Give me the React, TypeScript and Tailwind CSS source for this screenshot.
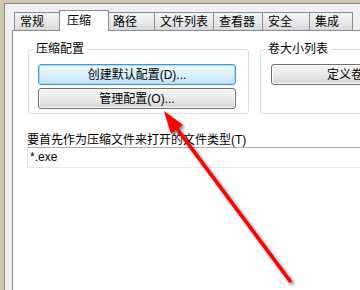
import React from "react";

const tabs = [
  { label: "常规", w: "w-[46px]" },
  { label: "压缩", w: "w-[50px]", active: true },
  { label: "路径", w: "w-[47px]" },
  { label: "文件列表", w: "w-[59px]" },
  { label: "查看器", w: "w-[49px]" },
  { label: "安全", w: "w-[47px]" },
  { label: "集成", w: "w-[43px]" },
];

const font = "font-['Liberation_Sans','Noto_Sans_CJK_SC',sans-serif]";

function Btn({ label, focused }: { label: string; focused?: boolean }) {
  return (
    <div
      className={
        "h-[21px] w-[198px] shrink-0 rounded-[3px] border flex items-center justify-center text-[12px] leading-none text-black " +
        (focused
          ? "border-[#3c9ad9] bg-gradient-to-b from-[#eef8fe] via-[#dcf0fb] to-[#c2e3f6] shadow-[inset_0_0_0_1px_#a8dcf7]"
          : "border-[#707070] bg-gradient-to-b from-[#f3f3f3] via-[#ebebeb] to-[#d4d4d4] shadow-[inset_0_0_0_1px_#fbfbfb]")
      }
    >
      {label}
    </div>
  );
}

function GroupBox({ title, children, className }: { title: string; children: React.ReactNode; className?: string }) {
  return (
    <div className={"relative rounded-[3px] border border-[#d5dfe5] " + (className ?? "")}>
      <span className="absolute -top-[8px] left-[4px] bg-white px-[3px] text-[12px] leading-[14px] text-black">{title}</span>
      {children}
    </div>
  );
}

export default function App() {
  return (
    <div className={"relative w-[360px] h-[290px] overflow-hidden bg-[#d0c8aa] pt-[3px] pl-[4px] " + font}>
      <div className="h-full border-l border-t border-[#8c8c8c] bg-[#f0f0f0] pl-[7px] pt-[6px] flex flex-col">
        {/* tab strip */}
        <div className="flex items-end h-[20px] pl-[2px]">
          {tabs.map((t) =>
            t.active ? (
              <div
                key={t.label}
                className={t.w + " relative z-10 -mx-[1px] h-[21px] -mb-[1px] border border-b-0 border-[#898c95] bg-white pl-[7px] pt-[2px] text-[12px] leading-[16px] text-black"}
              >
                {t.label}
              </div>
            ) : (
              <div
                key={t.label}
                className={t.w + " h-[18px] border border-b-0 border-l-0 first:border-l border-[#898c95] bg-gradient-to-b from-[#f2f2f2] via-[#ebebeb] to-[#d8d8d8] pl-[5px] pt-[1px] text-[12px] leading-[16px] text-black"}
              >
                {t.label}
              </div>
            )
          )}
        </div>
        {/* panel */}
        <div className="flex-1 border-l border-t border-[#898c95] bg-white pl-[15px] pt-[18px] flex flex-col">
          <div className="flex gap-[11px] w-[600px]">
            <GroupBox title="压缩配置" className="w-[221px] shrink-0 pl-[9px] pt-[14px] pb-[4px] flex flex-col gap-[3px]">
              <Btn label="创建默认配置(D)..." focused />
              <Btn label="管理配置(O)..." />
            </GroupBox>
            <GroupBox title="卷大小列表" className="w-[260px] shrink-0 pl-[10px] pt-[14px] h-[65px]">
              <Btn label="定义卷大小(S)..." />
            </GroupBox>
          </div>
          <div className="mt-[19px] -ml-[1px] text-[12px] leading-[14px] text-black">要首先作为压缩文件来打开的文件类型(T)</div>
          <div className="-ml-[1px] mt-[0px] h-[21px] w-[400px] border border-t-[#abadb3] border-l-[#e2e3ea] border-r-[#e2e3ea] border-b-[#e3e9ef] pl-[2px] text-[12px] leading-[19px] text-black">
            *.exe
          </div>
        </div>
      </div>

      {/* red arrow annotation */}
      <svg className="absolute inset-0" width="360" height="290" viewBox="0 0 360 290">
        <defs>
          <filter id="sh" x="-20%" y="-20%" width="140%" height="140%">
            <feGaussianBlur stdDeviation="1.6" />
          </filter>
        </defs>
        <g filter="url(#sh)" opacity="0.55" transform="translate(2,2)">
          <line x1="172" y1="122" x2="290" y2="281" stroke="#333" strokeWidth="4" strokeLinecap="round" />
          <polygon points="164,111 171,134 183,125" fill="#333" />
        </g>
        <line x1="172" y1="122" x2="290" y2="281" stroke="#ff0000" strokeWidth="3.5" strokeLinecap="round" />
        <polygon points="164,111 171,134 183,125" fill="#ff0000" />
      </svg>
    </div>
  );
}
